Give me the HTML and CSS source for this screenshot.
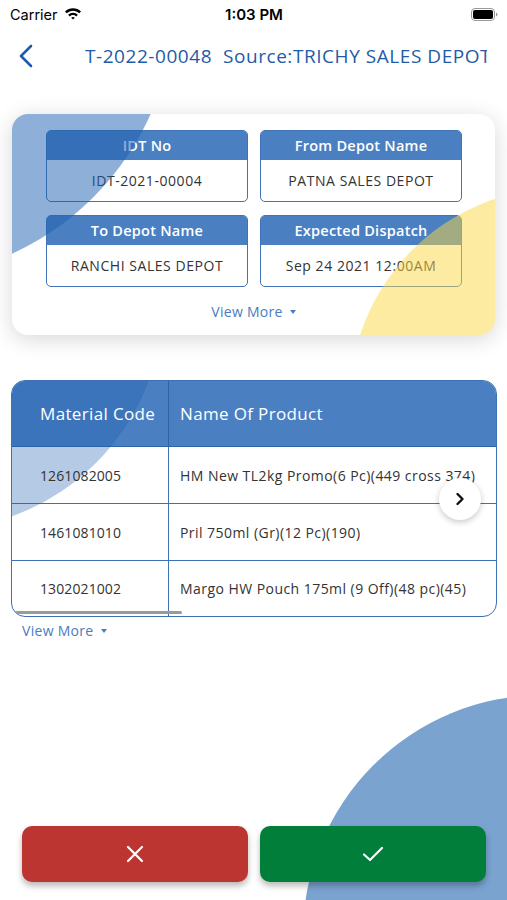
FILE: index.html
```html
<!DOCTYPE html>
<html>
<head>
<meta charset="utf-8">
<link rel="stylesheet" href="styles.css">
</head>
<body>
<div class="bg-circle"></div>
<div class="status">
  <div class="status-left">Carrier
    <svg class="wifi" width="18" height="13" viewBox="0 0 18 13"><path d="M1 4.6 A11.5 11.5 0 0 1 17 4.6 L15.3 6.3 A9 9 0 0 0 2.7 6.3 Z" fill="#000"/><path d="M4.1 7.7 A7 7 0 0 1 13.9 7.7 L12.2 9.4 A4.6 4.6 0 0 0 5.8 9.4 Z" fill="#000"/><path d="M7.2 10.8 A2.6 2.6 0 0 1 10.8 10.8 L9 12.6 Z" fill="#000"/></svg>
  </div>
  <div class="status-time">1:03 PM</div>
  <div class="status-right">
    <svg width="27" height="13" viewBox="0 0 27 13"><rect x="0.5" y="0.5" width="23" height="12" rx="3.5" fill="none" stroke="#999" stroke-width="1"/><rect x="2" y="2" width="20" height="9" rx="2" fill="#000"/><path d="M25 4.5 Q26.5 5 26.5 6.5 Q26.5 8 25 8.5 Z" fill="#999"/></svg>
  </div>
</div>
<div class="topbar">
  <svg class="back" width="16" height="24" viewBox="0 0 16 24"><path d="M13 2 L3 12 L13 22" fill="none" stroke="#1f5ba8" stroke-width="2.6" stroke-linecap="round" stroke-linejoin="round"/></svg>
  <div class="title">T-2022-00048&nbsp;&nbsp;Source:TRICHY SALES DEPOT</div>
</div>

<div class="card">
  <div class="card-blob-blue"></div>
  <div class="card-blob-yellow"></div>
  <div class="grid">
    <div class="box"><div class="box-h"><span>IDT No</span></div><div class="box-v"><span>IDT-2021-00004</span></div></div>
    <div class="box"><div class="box-h"><span>From Depot Name</span></div><div class="box-v"><span>PATNA SALES DEPOT</span></div></div>
    <div class="box"><div class="box-h"><span>To Depot Name</span></div><div class="box-v"><span>RANCHI SALES DEPOT</span></div></div>
    <div class="box"><div class="box-h"><span>Expected Dispatch</span></div><div class="box-v"><span>Sep 24 2021 12:00AM</span></div></div>
  </div>
  <div class="more center">View More <span class="caret"></span></div>
</div>

<div class="table-wrap">
  <div class="table-blob"></div>
  <div class="trow thead">
    <div class="c1">Material Code</div>
    <div class="c2">Name Of Product</div>
  </div>
  <div class="trow">
    <div class="c1">1261082005</div>
    <div class="c2">HM New TL2kg Promo(6 Pc)(449 cross 374)</div>
  </div>
  <div class="trow">
    <div class="c1">1461081010</div>
    <div class="c2">Pril 750ml (Gr)(12 Pc)(190)</div>
  </div>
  <div class="trow last">
    <div class="c1">1302021002</div>
    <div class="c2">Margo HW Pouch 175ml (9 Off)(48 pc)(45)</div>
  </div>
  <div class="scrollbar"></div>
</div>
<div class="next-btn"><svg width="14" height="14" viewBox="0 0 14 14"><path d="M4.5 2 L9.5 7 L4.5 12" fill="none" stroke="#111" stroke-width="2.4" stroke-linecap="round" stroke-linejoin="round"/></svg></div>
<div class="more left">View More <span class="caret"></span></div>

<div class="actions">
  <div class="btn reject"><svg width="18" height="18" viewBox="0 0 18 18"><path d="M2 2 L16 16 M16 2 L2 16" stroke="#fff" stroke-width="2.2" stroke-linecap="round"/></svg></div>
  <div class="btn accept"><svg width="22" height="16" viewBox="0 0 22 16"><path d="M2 8.5 L8 14 L20 2" fill="none" stroke="#fff" stroke-width="2.2" stroke-linecap="round" stroke-linejoin="round"/></svg></div>
</div>
</body>
</html>
```

FILE: styles.css
```css
* { box-sizing: border-box; }
html, body { margin: 0; padding: 0; }
body {
  width: 507px;
  height: 900px;
  overflow: hidden;
  position: relative;
  background: #fff;
  font-family: "Open Sans", "Noto Sans", sans-serif;
  color: #333;
  display: flex;
  flex-direction: column;
}
.bg-circle {
  position: absolute;
  left: 303px;
  top: 695px;
  width: 480px;
  height: 480px;
  border-radius: 50%;
  background: #7ba3d0;
  z-index: 0;
}
.status {
  height: 28px;
  display: flex;
  align-items: center;
  justify-content: space-between;
  padding: 0 9px 0 10px;
  font-family: "Inter", "Liberation Sans", sans-serif;
  font-size: 14.5px;
  color: #000;
  position: relative;
}
.status-left { display: flex; align-items: center; gap: 6px; width: 120px; }
.wifi { margin-top: -1px; }
.status-time { font-weight: 600; font-size: 15px; }
.status-right { width: 120px; display: flex; justify-content: flex-end; }
.topbar {
  height: 58px;
  display: flex;
  align-items: center;
  padding-left: 18px;
  overflow: hidden;
  white-space: nowrap;
}
.back { flex: none; margin-top: -2px; }
.title {
  margin-left: 51px;
  font-size: 19px;
  font-weight: 500;
  letter-spacing: 0.55px;
  color: #1f5ba8;
  width: 402px;
  overflow: hidden;
  margin-top: -2px;
}
.card {
  position: relative;
  margin: 28px 12px 0 12px;
  height: 221px;
  border-radius: 16px;
  background: #fff;
  box-shadow: 0 4px 22px rgba(0,0,0,0.16);
  overflow: hidden;
  padding: 16px 33px 0 34px;
  z-index: 1;
}
.card-blob-blue {
  position: absolute;
  left: -395px;
  top: -393px;
  width: 558px;
  height: 558px;
  border-radius: 50%;
  background: rgba(30,95,175,0.5);
  z-index: 2;
}
.card-blob-yellow {
  position: absolute;
  left: 338px;
  top: 74px;
  width: 424px;
  height: 424px;
  border-radius: 50%;
  background: rgba(252,216,70,0.5);
  z-index: 2;
}
.grid {
  display: grid;
  grid-template-columns: 202px 202px;
  column-gap: 12px;
  row-gap: 13px;
}
.box {
  height: 72px;
  border: 1.5px solid #3f72b6;
  border-radius: 5px;
  display: flex;
  flex-direction: column;
  position: relative;
  z-index: 1;
}
.box-h {
  height: 29px;
  background: #4a7fc1;
  color: #fff;
  font-size: 14.5px;
  font-weight: 600;
  letter-spacing: 0.25px;
  display: flex;
  align-items: center;
  justify-content: center;
  border-radius: 3.5px 3.5px 0 0;
}
.box-v {
  flex: 1;
  display: flex;
  align-items: center;
  justify-content: center;
  font-size: 14px;
  letter-spacing: 0.55px;
  color: #333;
  padding-bottom: 1px;
}
.box-h span, .box-v span { position: relative; z-index: 3; }
.more {
  font-size: 14px;
  letter-spacing: 0.3px;
  color: #4a7cc0;
  position: relative;
  z-index: 3;
  display: flex;
  align-items: center;
  gap: 7px;
}
.more.center { justify-content: center; margin-top: 15px; margin-left: -1px; }
.more.left { margin: 4px 0 0 22px; }
.caret {
  width: 0; height: 0;
  border-left: 3.5px solid transparent;
  border-right: 3.5px solid transparent;
  border-top: 4px solid #4a7cc0;
}
.table-wrap {
  position: relative;
  margin: 45px 10px 0 11px;
  height: 237px;
  border: 1.5px solid #3d71b6;
  border-radius: 14px;
  overflow: hidden;
  background: #fff;
  z-index: 1;
}
.table-blob {
  position: absolute;
  left: -307px;
  top: -309px;
  width: 458px;
  height: 458px;
  border-radius: 50%;
  background: rgba(30,95,175,0.33);
  z-index: 2;
}
.trow {
  display: flex;
  height: 57px;
  border-bottom: 1.5px solid #3d71b6;
  font-size: 14px;
  letter-spacing: 0.45px;
  color: #333;
  width: 580px;
}
.trow.last { border-bottom: none; height: 55px; }
.trow > div { display: flex; align-items: center; position: relative; z-index: 3; }
.c1 { width: 157px; padding-left: 28px; border-right: 1.5px solid #3d71b6; flex: none; letter-spacing: 0.1px; }
.c2 { flex: 1; padding-left: 11px; white-space: nowrap; }
.thead {
  height: 66px;
  background: #4a7fc1;
  color: #fff;
  font-size: 17px;
  font-weight: 500;
  letter-spacing: 0.35px;
  border-bottom: 1.5px solid #2f63a8;
}
.thead .c1 { border-right-color: #2f63a8; letter-spacing: 0.35px; }
.scrollbar {
  position: absolute;
  left: 2px;
  bottom: 2px;
  width: 168px;
  height: 3px;
  border-radius: 2px;
  background: #9a9a9a;
  z-index: 4;
}
.next-btn {
  position: absolute;
  left: 439px;
  top: 478px;
  width: 42px;
  height: 42px;
  border-radius: 50%;
  background: #fff;
  box-shadow: 0 2px 6px rgba(0,0,0,0.22);
  display: flex;
  align-items: center;
  justify-content: center;
  z-index: 5;
}
.actions {
  margin-top: auto;
  margin-bottom: 18px;
  display: flex;
  gap: 12px;
  padding: 0 21px 0 22px;
  position: relative;
  z-index: 1;
}
.btn {
  flex: 1;
  height: 56px;
  border-radius: 10px;
  display: flex;
  align-items: center;
  justify-content: center;
  box-shadow: 0 4px 6px rgba(0,0,0,0.28);
}
.reject { background: #bc3530; }
.accept { background: #027e3b; }
```
